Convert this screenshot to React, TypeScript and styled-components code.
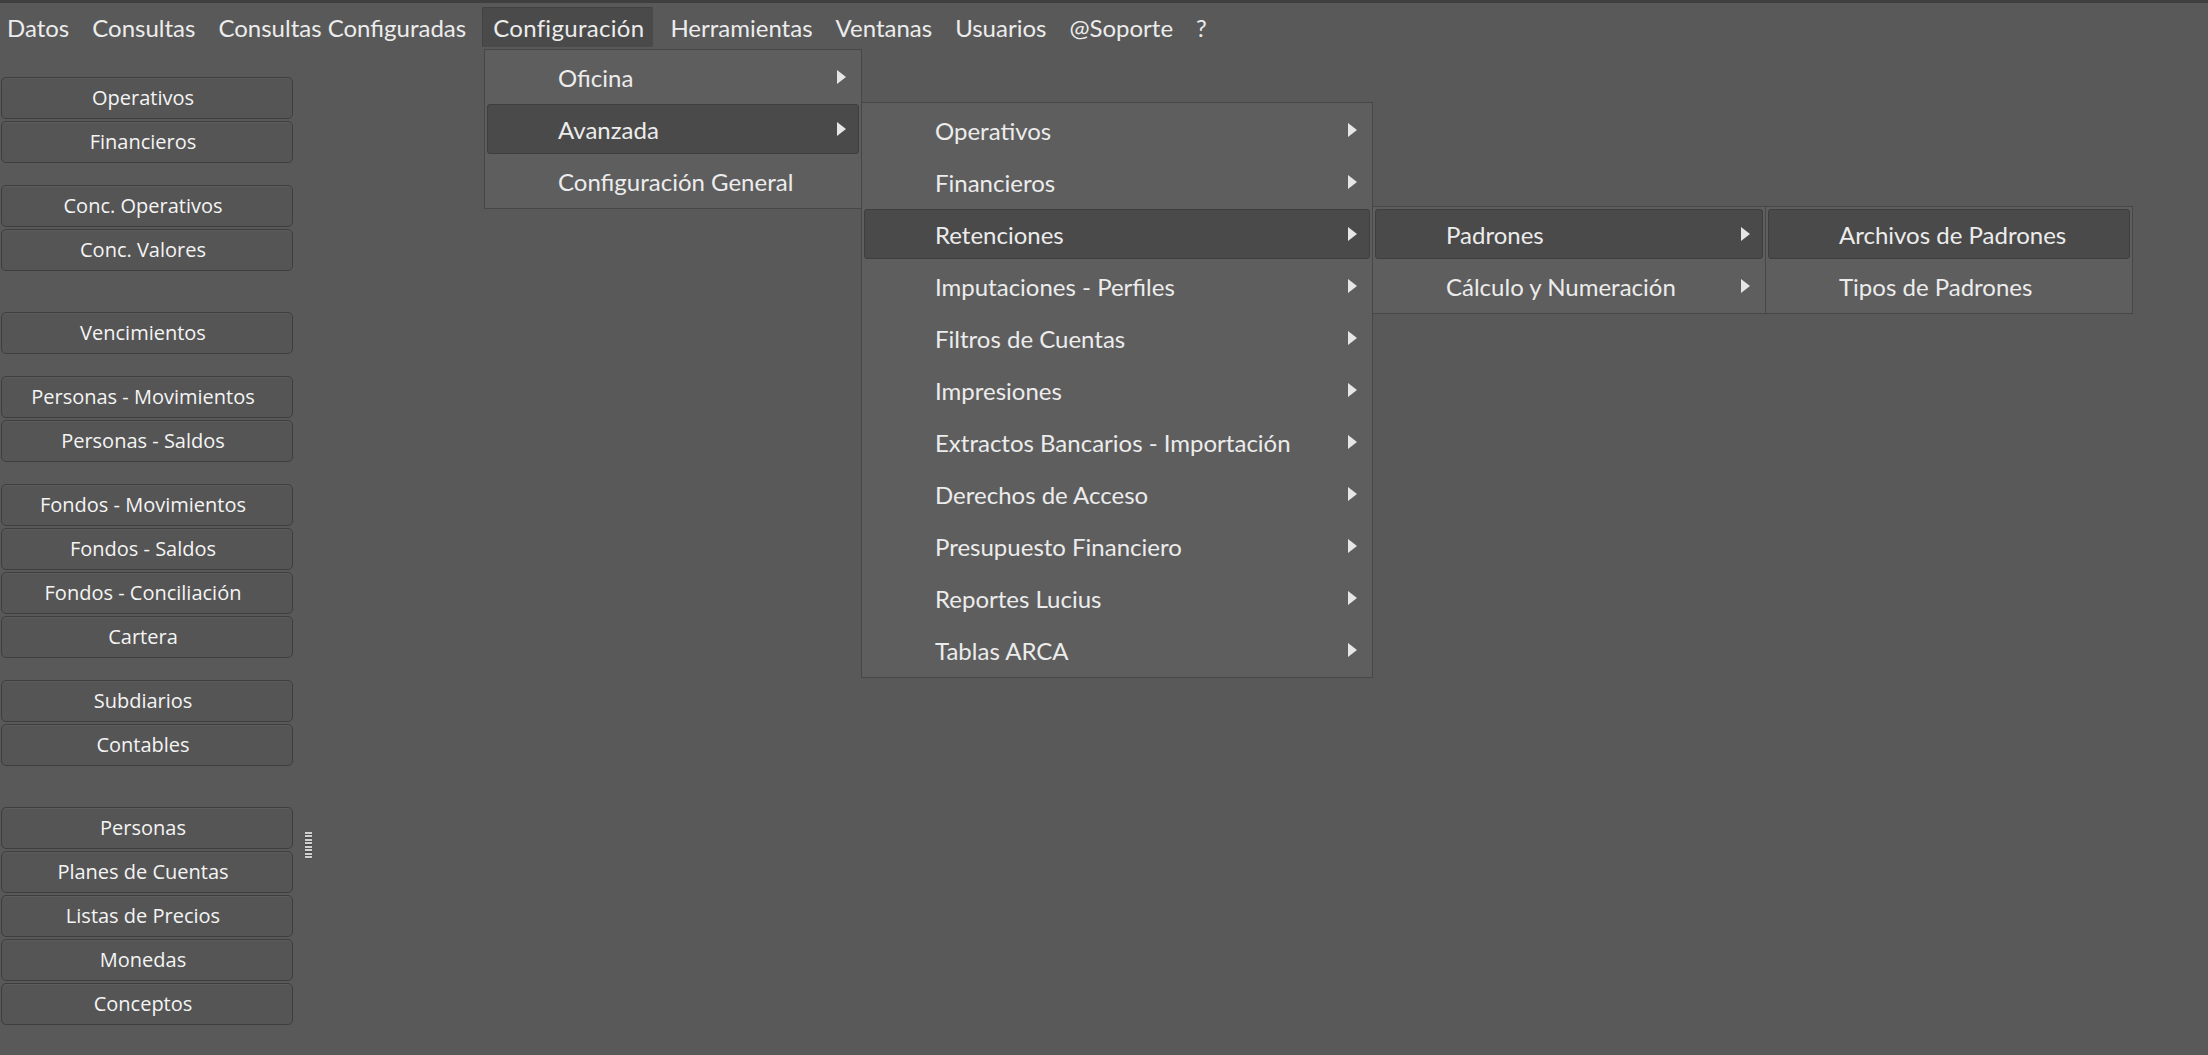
import React from 'react';
import styled, { createGlobalStyle } from 'styled-components';

const GlobalStyle = createGlobalStyle`
  html, body {
    margin: 0;
    padding: 0;
    background: #595959;
    overflow: hidden;
  }
`;

interface MenuEntry {
  label: string;
  sub?: boolean;
  active?: boolean;
}

const menuBarItems = [
  'Datos',
  'Consultas',
  'Consultas Configuradas',
  'Configuración',
  'Herramientas',
  'Ventanas',
  'Usuarios',
  '@Soporte',
  '?',
];

// each inner array is a group of buttons, gap says how much space goes before it
const sideGroups: { gap: number; items: string[] }[] = [
  { gap: 0, items: ['Operativos', 'Financieros'] },
  { gap: 20, items: ['Conc. Operativos', 'Conc. Valores'] },
  { gap: 39, items: ['Vencimientos'] },
  { gap: 20, items: ['Personas - Movimientos', 'Personas - Saldos'] },
  {
    gap: 20,
    items: ['Fondos - Movimientos', 'Fondos - Saldos', 'Fondos - Conciliación', 'Cartera'],
  },
  { gap: 20, items: ['Subdiarios', 'Contables'] },
  {
    gap: 39,
    items: ['Personas', 'Planes de Cuentas', 'Listas de Precios', 'Monedas', 'Conceptos'],
  },
];

const configMenu: MenuEntry[] = [
  { label: 'Oficina', sub: true },
  { label: 'Avanzada', sub: true, active: true },
  { label: 'Configuración General' },
];

const avanzadaMenu: MenuEntry[] = [
  { label: 'Operativos', sub: true },
  { label: 'Financieros', sub: true },
  { label: 'Retenciones', sub: true, active: true },
  { label: 'Imputaciones - Perfiles', sub: true },
  { label: 'Filtros de Cuentas', sub: true },
  { label: 'Impresiones', sub: true },
  { label: 'Extractos Bancarios - Importación', sub: true },
  { label: 'Derechos de Acceso', sub: true },
  { label: 'Presupuesto Financiero', sub: true },
  { label: 'Reportes Lucius', sub: true },
  { label: 'Tablas ARCA', sub: true },
];

const retencionesMenu: MenuEntry[] = [
  { label: 'Padrones', sub: true, active: true },
  { label: 'Cálculo y Numeración', sub: true },
];

const padronesMenu: MenuEntry[] = [
  { label: 'Archivos de Padrones', active: true },
  { label: 'Tipos de Padrones' },
];

const Arrow = () => (
  <svg width="9" height="14" viewBox="0 0 9 14">
    <polygon points="0,0 9,7 0,14" fill="#e6e6e6" />
  </svg>
);

const PopupMenu: React.FC<{ items: MenuEntry[]; left: number; top: number; width: number }> = ({
  items,
  left,
  top,
  width,
}) => (
  <MenuPanel $left={left} $top={top} $width={width}>
    {items.map((item) => (
      <MenuRow key={item.label} $active={item.active}>
        <MenuLabel>{item.label}</MenuLabel>
        {item.sub && <Arrow />}
      </MenuRow>
    ))}
  </MenuPanel>
);

export default function App() {
  return (
    <Window>
      <GlobalStyle />
      <TopEdge />
      <MenuBar>
        {menuBarItems.map((label) => (
          <MenuBarItem key={label} $open={label === 'Configuración'}>
            {label}
          </MenuBarItem>
        ))}
      </MenuBar>
      <Body>
        <Sidebar>
          {sideGroups.map((group, i) => (
            <ButtonGroup key={i} $gap={group.gap}>
              {group.items.map((label) => (
                <SideButton key={label} type="button">
                  {label}
                </SideButton>
              ))}
            </ButtonGroup>
          ))}
        </Sidebar>
        <Splitter>
          <Grip />
        </Splitter>
      </Body>

      <PopupMenu items={configMenu} left={484} top={49} width={378} />
      <PopupMenu items={avanzadaMenu} left={861} top={102} width={512} />
      <PopupMenu items={retencionesMenu} left={1372} top={206} width={394} />
      <PopupMenu items={padronesMenu} left={1765} top={206} width={368} />
    </Window>
  );
}

const Window = styled.div`
  position: relative;
  height: 100vh;
  display: flex;
  flex-direction: column;
  background: #595959;
  color: #ececec;
`;

const TopEdge = styled.div`
  height: 3px;
  background: #3f3f3f;
`;

const MenuBar = styled.div`
  height: 48px;
  display: flex;
  align-items: center;
  gap: 3px;
  font-family: Lato, 'Open Sans', sans-serif;
  font-size: 24px;
`;

const MenuBarItem = styled.div<{ $open?: boolean }>`
  height: 40px;
  display: flex;
  align-items: center;
  padding: ${(p) => (p.$open ? '0 9px 0 11px' : '0 10px')};
  margin: ${(p) => (p.$open ? '0 4px 0 3px' : '0')};
  box-sizing: border-box;
  color: #ececec;
  letter-spacing: ${(p) => (p.$open ? '0.3px' : '0')};
  background: ${(p) => (p.$open ? '#4a4a4a' : 'transparent')};
  border-radius: 2px;
  box-shadow: ${(p) => (p.$open ? 'inset 1px 1px 0 #424242' : 'none')};

  &:first-child {
    padding-left: 7px;
  }
`;

const Body = styled.div`
  flex: 1;
  display: flex;
`;

const Sidebar = styled.div`
  width: 292px;
  padding: 26px 0 0 1px;
  display: flex;
  flex-direction: column;
  gap: 2px;
`;

const ButtonGroup = styled.div<{ $gap: number }>`
  display: flex;
  flex-direction: column;
  gap: 2px;
  margin-top: ${(p) => p.$gap}px;
`;

const SideButton = styled.button`
  height: 42px;
  width: 100%;
  margin: 0;
  padding: 0 8px 0 0;
  background: #555555;
  border: 1px solid #3e3e3e;
  border-radius: 5px;
  box-shadow: inset 0 1px 0 #5c5c5c;
  color: #f4f4f4;
  font-family: 'Open Sans', 'Noto Sans', sans-serif;
  font-size: 20px;
  line-height: 1;
`;

const Splitter = styled.div`
  width: 20px;
  padding: 781px 0 0 12px;
`;

const Grip = styled.div`
  width: 7px;
  height: 27px;
  background: repeating-linear-gradient(to bottom, #cfcfcf 0 2px, #4e4e4e 2px 3.5px);
`;

const MenuPanel = styled.div<{ $left: number; $top: number; $width: number }>`
  position: absolute;
  left: ${(p) => p.$left}px;
  top: ${(p) => p.$top}px;
  width: ${(p) => p.$width}px;
  box-sizing: border-box;
  padding: 2px;
  display: flex;
  flex-direction: column;
  gap: 2px;
  background: #5e5e5e;
  border: 1px solid #474747;
  font-family: Lato, 'Open Sans', sans-serif;
  font-size: 24px;
`;

const MenuRow = styled.div<{ $active?: boolean }>`
  height: 50px;
  box-sizing: border-box;
  display: flex;
  align-items: center;
  padding: 0 12px 0 70px;
  border-radius: 3px;
  background: ${(p) => (p.$active ? '#4a4a4a' : 'transparent')};
  border: 1px solid ${(p) => (p.$active ? '#3e3e3e' : 'transparent')};
  color: #ececec;
`;

const MenuLabel = styled.span`
  flex: 1;
  white-space: nowrap;
`;
